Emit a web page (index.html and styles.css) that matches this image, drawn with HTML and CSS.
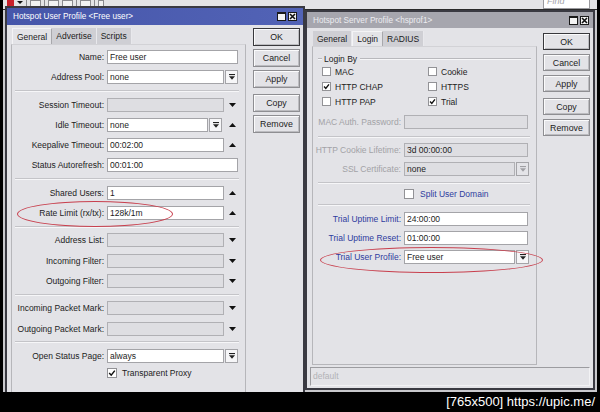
FILE: index.html
```html
<!DOCTYPE html>
<html>
<head>
<meta charset="utf-8">
<title>Hotspot Profiles</title>
<link rel="stylesheet" href="styles.css">
</head>
<body>
<div class="desktop">
  <div class="screen">
    <div class="backdrop">
      <div class="toolbar">
        <span class="tb-logo"></span>
        <span class="tb-caret"></span>
        <span class="tb-sep"></span>
        <span class="tb-icon"></span>
        <span class="tb-sep"></span>
        <span class="tb-icon"></span>
        <span class="tb-icon"></span>
        <span class="tb-sep"></span>
        <span class="tb-icon"></span>
        <span class="tb-sep"></span>
        <span class="tb-icon narrow"></span>
        <span class="find">Find</span>
      </div>
    </div>

    <section class="win win-left">
      <header class="titlebar active">
        <span class="title">Hotspot User Profile &lt;Free user&gt;</span>
        <span class="tbtns">
          <span class="tbtn max"></span>
          <span class="tbtn close"><svg width="7" height="7" viewBox="0 0 7 7"><path d="M1 1L6 6M6 1L1 6" stroke="#111" stroke-width="1.6"/></svg></span>
        </span>
      </header>
      <div class="wbody wbody-left">
        <div class="main main-left">
          <nav class="tabs tabs-left">
            <span class="tab on">General</span><span class="tab">Advertise</span><span class="tab">Scripts</span>
          </nav>
          <div class="panel panel-left">
            <div class="row first"><label class="lbl">Name:</label><div class="fld"><span class="in w131">Free user</span></div></div>
            <div class="row"><label class="lbl">Address Pool:</label><div class="fld"><span class="in w117">none</span><span class="dd"><svg width="6" height="6" viewBox="0 0 6 6"><rect width="6" height="1.1"/><path d="M0 2.3H6L3 5.8Z"/></svg></span></div></div>
            <div class="sep"></div>
            <div class="row"><label class="lbl">Session Timeout:</label><div class="fld"><span class="in dis w117"></span><span class="arr"><svg width="7" height="4" viewBox="0 0 7 4"><path d="M0 0H7L3.5 4Z"/></svg></span></div></div>
            <div class="row"><label class="lbl">Idle Timeout:</label><div class="fld"><span class="in w101">none</span><span class="dd"><svg width="6" height="6" viewBox="0 0 6 6"><rect width="6" height="1.1"/><path d="M0 2.3H6L3 5.8Z"/></svg></span><span class="arr"><svg width="7" height="4" viewBox="0 0 7 4"><path d="M0 4H7L3.5 0Z"/></svg></span></div></div>
            <div class="row"><label class="lbl">Keepalive Timeout:</label><div class="fld"><span class="in w117">00:02:00</span><span class="arr"><svg width="7" height="4" viewBox="0 0 7 4"><path d="M0 4H7L3.5 0Z"/></svg></span></div></div>
            <div class="row"><label class="lbl">Status Autorefresh:</label><div class="fld"><span class="in w131">00:01:00</span></div></div>
            <div class="sep"></div>
            <div class="row"><label class="lbl">Shared Users:</label><div class="fld"><span class="in w117">1</span><span class="arr"><svg width="7" height="4" viewBox="0 0 7 4"><path d="M0 4H7L3.5 0Z"/></svg></span></div></div>
            <div class="row"><label class="lbl">Rate Limit (rx/tx):</label><div class="fld"><span class="in w117">128k/1m</span><span class="arr"><svg width="7" height="4" viewBox="0 0 7 4"><path d="M0 4H7L3.5 0Z"/></svg></span></div></div>
            <div class="sep"></div>
            <div class="row"><label class="lbl">Address List:</label><div class="fld"><span class="in dis w117"></span><span class="arr"><svg width="7" height="4" viewBox="0 0 7 4"><path d="M0 0H7L3.5 4Z"/></svg></span></div></div>
            <div class="row"><label class="lbl">Incoming Filter:</label><div class="fld"><span class="in dis w117"></span><span class="arr"><svg width="7" height="4" viewBox="0 0 7 4"><path d="M0 0H7L3.5 4Z"/></svg></span></div></div>
            <div class="row"><label class="lbl">Outgoing Filter:</label><div class="fld"><span class="in dis w117"></span><span class="arr"><svg width="7" height="4" viewBox="0 0 7 4"><path d="M0 0H7L3.5 4Z"/></svg></span></div></div>
            <div class="sep"></div>
            <div class="row"><label class="lbl">Incoming Packet Mark:</label><div class="fld"><span class="in dis w117"></span><span class="arr"><svg width="7" height="4" viewBox="0 0 7 4"><path d="M0 0H7L3.5 4Z"/></svg></span></div></div>
            <div class="row"><label class="lbl">Outgoing Packet Mark:</label><div class="fld"><span class="in dis w117"></span><span class="arr"><svg width="7" height="4" viewBox="0 0 7 4"><path d="M0 0H7L3.5 4Z"/></svg></span></div></div>
            <div class="sep"></div>
            <div class="row"><label class="lbl">Open Status Page:</label><div class="fld"><span class="in w117">always</span><span class="dd"><svg width="6" height="6" viewBox="0 0 6 6"><rect width="6" height="1.1"/><path d="M0 2.3H6L3 5.8Z"/></svg></span></div></div>
            <div class="row chkrow"><span class="lbl"></span><div class="fld"><span class="box"><svg width="8" height="8" viewBox="0 0 8 8"><path d="M1.2 4L3.2 6.2L6.8 1.6" fill="none" stroke="#111" stroke-width="1.5"/></svg></span><span class="cblabel">Transparent Proxy</span></div></div>
          </div>
        </div>
        <div class="btncol btncol-left">
          <span class="btn def">OK</span>
          <span class="btn">Cancel</span>
          <span class="btn">Apply</span>
          <span class="btn gap">Copy</span>
          <span class="btn">Remove</span>
        </div>
      </div>
    </section>

    <section class="win win-right">
      <header class="titlebar inactive">
        <span class="title">Hotspot Server Profile &lt;hsprof1&gt;</span>
        <span class="tbtns">
          <span class="tbtn max"></span>
          <span class="tbtn close"><svg width="7" height="7" viewBox="0 0 7 7"><path d="M1 1L6 6M6 1L1 6" stroke="#111" stroke-width="1.6"/></svg></span>
        </span>
      </header>
      <div class="wbody wbody-right">
        <div class="main main-right">
          <nav class="tabs tabs-right">
            <span class="tab">General</span><span class="tab on">Login</span><span class="tab">RADIUS</span>
          </nav>
          <div class="panel panel-right">
            <div class="legend"><span class="lg-line short"></span><span class="lg-text">Login By</span><span class="lg-line"></span></div>
            <div class="cbgrid">
              <div class="cb"><span class="box sm"></span><span>MAC</span></div>
              <div class="cb"><span class="box sm"></span><span>Cookie</span></div>
              <div class="cb"><span class="box sm"><svg width="7" height="7" viewBox="0 0 8 8"><path d="M1.2 4L3.2 6.2L6.8 1.6" fill="none" stroke="#111" stroke-width="1.6"/></svg></span><span>HTTP CHAP</span></div>
              <div class="cb"><span class="box sm"></span><span>HTTPS</span></div>
              <div class="cb"><span class="box sm"></span><span>HTTP PAP</span></div>
              <div class="cb"><span class="box sm"><svg width="7" height="7" viewBox="0 0 8 8"><path d="M1.2 4L3.2 6.2L6.8 1.6" fill="none" stroke="#111" stroke-width="1.6"/></svg></span><span>Trial</span></div>
            </div>
            <div class="row rrow mac"><label class="lbl rl gray">MAC Auth. Password:</label><div class="fld rf"><span class="in dis w124"></span></div></div>
            <div class="sep rs1"></div>
            <div class="row rrow"><label class="lbl rl gray">HTTP Cookie Lifetime:</label><div class="fld rf"><span class="in dis w124">3d 00:00:00</span></div></div>
            <div class="row rrow"><label class="lbl rl gray">SSL Certificate:</label><div class="fld rf"><span class="in dis w111">none</span><span class="dd dd-dis"><svg width="6" height="6" viewBox="0 0 6 6"><rect width="6" height="1.1"/><path d="M0 2.3H6L3 5.8Z"/></svg></span></div></div>
            <div class="sep rs2"></div>
            <div class="row rrow split"><span class="lbl rl"></span><div class="fld rf"><span class="box"></span><span class="cblabel blue">Split User Domain</span></div></div>
            <div class="sep rs3"></div>
            <div class="row rrow"><label class="lbl rl blue">Trial Uptime Limit:</label><div class="fld rf"><span class="in w124">24:00:00</span></div></div>
            <div class="row rrow"><label class="lbl rl blue">Trial Uptime Reset:</label><div class="fld rf"><span class="in w124">01:00:00</span></div></div>
            <div class="row rrow"><label class="lbl rl blue">Trial User Profile:</label><div class="fld rf"><span class="in w111">Free user</span><span class="dd"><svg width="6" height="6" viewBox="0 0 6 6"><rect width="6" height="1.1"/><path d="M0 2.3H6L3 5.8Z"/></svg></span></div></div>
          </div>
        </div>
        <div class="btncol btncol-right">
          <span class="btn def">OK</span>
          <span class="btn">Cancel</span>
          <span class="btn">Apply</span>
          <span class="btn gap">Copy</span>
          <span class="btn">Remove</span>
        </div>
      </div>
      <div class="statusbar">default</div>
    </section>

    <span class="ring ring-left"></span>
    <span class="ring ring-right"></span>
  </div>
  <div class="caption">[765x500] https://upic.me/</div>
</div>
</body>
</html>
```

FILE: styles.css
```css
* { box-sizing: border-box; }
html, body { margin: 0; padding: 0; }
body {
  width: 600px;
  height: 412px;
  overflow: hidden;
  background: #000;
  font-family: "Liberation Sans", Arial, sans-serif;
  font-size: 8.5px;
  color: #1c1c1c;
}
.desktop { width: 600px; height: 412px; display: flex; flex-direction: column; background: #000; }
.screen { position: relative; width: 600px; height: 392px; overflow: hidden; flex: none; }

/* window behind */
.backdrop { position: absolute; left: 3px; top: 0; width: 594px; height: 392px; background: #c9c9cd; }
.toolbar {
  display: flex; align-items: flex-end; gap: 3px;
  height: 10px; padding: 0 7px 0 4px;
  background: #e4e4e6; border-bottom: 1px solid #2a2a2a; overflow: hidden;
}
.tb-logo { width: 7px; height: 7px; background: #c8202a; margin-bottom: 2px; }
.tb-caret { width: 0; height: 0; border-left: 3px solid transparent; border-right: 3px solid transparent; border-top: 3px solid #111; margin-bottom: 5px; }
.tb-sep { width: 1px; height: 9px; background: #8a8a8e; }
.tb-icon { width: 11px; height: 8px; border: 1px solid #8a8a8e; background: #f2f2f2; margin-bottom: 1px; }
.tb-icon.narrow { width: 6px; }
.find {
  margin-left: auto; width: 47px; height: 14px;
  background: #fff; border: 1px solid #9a9a9e;
  color: #a4a4a8; font-style: italic; font-size: 9px; line-height: 11px; padding-left: 3px;
}

/* windows */
.win { position: absolute; display: flex; flex-direction: column; background: #e3e3e7; border: 2px solid #3a3a42; overflow: hidden; }
.win-left { left: 5px; top: 6px; width: 300px; height: 400px; }
.win-right { left: 305px; top: 10px; width: 290px; height: 380px; }

.titlebar { flex: none; display: flex; align-items: center; justify-content: space-between; font-size: 8.2px; }
.titlebar.active { height: 17px; padding: 0 6px; background: linear-gradient(to right, #4656aa, #5263b6); color: #fff; }
.titlebar.inactive { height: 16px; padding: 0 4px 0 6px; background: #a6a6ae; color: #ececf0; }
.tbtns { display: flex; gap: 2px; }
.tbtn { width: 9px; height: 9px; background: #f4f4f4; border: 1px solid #1a1a1a; display: flex; align-items: center; justify-content: center; }
.tbtn.max { border-top-width: 2px; box-shadow: inset 0 0 0 1px #f4f4f4; }

.wbody { display: flex; flex: 1; min-height: 0; }
.wbody-left { padding: 3px 3px 0 4px; gap: 7px; }
.wbody-right { padding: 3px 3px 1px 5px; gap: 6px; }
.main { display: flex; flex-direction: column; flex: none; }
.main-left { width: 235px; }
.main-right { width: 225px; }

.tabs { display: flex; flex: none; padding-left: 1px; }
.tabs-left { height: 16px; }
.tabs-right { height: 15px; }
.tab { padding: 0 4px; display: flex; align-items: center; background: #cfcfd4; border-right: 1px solid #e8e8ec; color: #1c1c1c; }
.tab.on { background: #e3e3e7; border-top: 1px solid #f4f4f6; border-left: 1px solid #f4f4f6; border-right: 1px solid #a8a8ac; }

.panel { flex: 1; display: flex; flex-direction: column; border: 1px solid #b6b6ba; border-top-color: #d2d2d6; }
.panel-left { padding-top: 5px; }
.panel-right { padding-top: 6px; }

.row { display: flex; align-items: center; height: 14px; margin-top: 6.2px; flex: none; }
.row.first, .sep + .row { margin-top: 0; }
.lbl { width: 92px; flex: none; text-align: right; white-space: nowrap; }
.fld { width: 131px; margin-left: 3px; display: flex; align-items: center; flex: none; }
.in {
  height: 14px; border: 1px solid #a4a4a8; background: #fff;
  padding: 0 2px; line-height: 12px; white-space: nowrap; overflow: hidden; flex: none;
}
.in.dis { background: #dedee2; border-color: #b0b0b4; }
.w131 { width: 131px; }
.w117 { width: 117px; }
.w101 { width: 101px; }
.w124 { width: 124px; }
.w111 { width: 111px; }
.dd {
  width: 13px; height: 14px; margin-left: 1px; flex: none;
  border: 1px solid #a4a4a8; background: #f6f6f8;
  display: flex; align-items: center; justify-content: center;
}
.dd svg { fill: #222; }
.dd-dis { background: #e4e4e8; }
.dd-dis svg { fill: #a0a0a4; }
.arr { width: 12px; margin-left: auto; display: flex; justify-content: center; }
.arr svg { fill: #111; }

.sep { flex: none; height: 2px; border-top: 1px solid #c4c4c8; border-bottom: 1px solid #f6f6f8; margin: 5.75px 6px 5.75px 3px; }

.chkrow { height: 12px; margin-top: 4px; }
.box {
  width: 10px; height: 10px; flex: none;
  background: #fff; border: 1px solid #929296;
  display: flex; align-items: center; justify-content: center;
}
.box.sm { width: 9px; height: 9px; }
.cblabel { margin-left: 5px; white-space: nowrap; }

/* right panel */
.legend { display: flex; align-items: center; height: 11px; margin: 0 5px 0 5px; flex: none; }
.lg-line { flex: 1; height: 2px; border-top: 1px solid #b8b8bc; border-bottom: 1px solid #f6f6f8; }
.lg-line.short { flex: none; width: 4px; }
.lg-text { padding: 0 3px 0 2px; }
.cbgrid { display: grid; grid-template-columns: 106px 1fr; grid-auto-rows: 15px; margin-left: 9px; flex: none; }
.cb { display: flex; align-items: center; gap: 4px; white-space: nowrap; }

.rrow { margin-top: 5px; }
.rrow.mac { margin-top: 6px; }
.lbl.rl { width: 88px; }
.fld.rf { width: 124px; }
.gray { color: #a2a2a6; }
.blue { color: #2e3c9e; }
.rs1 { margin: 6.5px 6px 5.5px 5px; }
.rs2 { margin: 5.5px 6px 4.5px 5px; }
.rs3 { margin: 4.5px 6px 6.5px 5px; }
.split { height: 11px; }
.split .box { width: 10px; height: 10px; }
.split .cblabel { margin-left: 6px; }

/* buttons */
.btncol { width: 47px; flex: none; display: flex; flex-direction: column; }
.btncol-left { gap: 3px; }
.btncol-right { gap: 4px; padding-top: 2px; }
.btn {
  display: flex; align-items: center; justify-content: center;
  background: #e3e3e7; border: 1px solid #8e8e92;
  box-shadow: inset 1px 1px 0 #fbfbfc, inset -1px -1px 0 #bcbcc0;
  color: #1c1c1c; font-size: 8.8px; flex: none;
}
.btncol-left .btn { height: 18px; }
.btncol-right .btn { height: 17px; }
.btn.def { border-color: #38383c; }
.btn.gap { margin-top: 3px; }
.btncol-right .btn.gap { margin-top: 2px; }

.statusbar {
  flex: none; height: 19px; margin: 1px 3px 2px 3px;
  border: 1px solid; border-color: #9c9ca0 #f2f2f4 #f2f2f4 #9c9ca0;
  color: #b2b2b6; padding-left: 2px; line-height: 17px;
}

/* annotation rings */
.ring { position: absolute; border: 1.5px solid #c8404e; border-radius: 50%; }
.ring-left { left: 17px; top: 201px; width: 156px; height: 26px; }
.ring-right { left: 320px; top: 247px; width: 223px; height: 26px; }

.caption {
  height: 20px; line-height: 20px; text-align: right; padding-right: 5px;
  color: #fff; font-size: 13px; font-family: "Liberation Sans", Arial, sans-serif;
}
```
